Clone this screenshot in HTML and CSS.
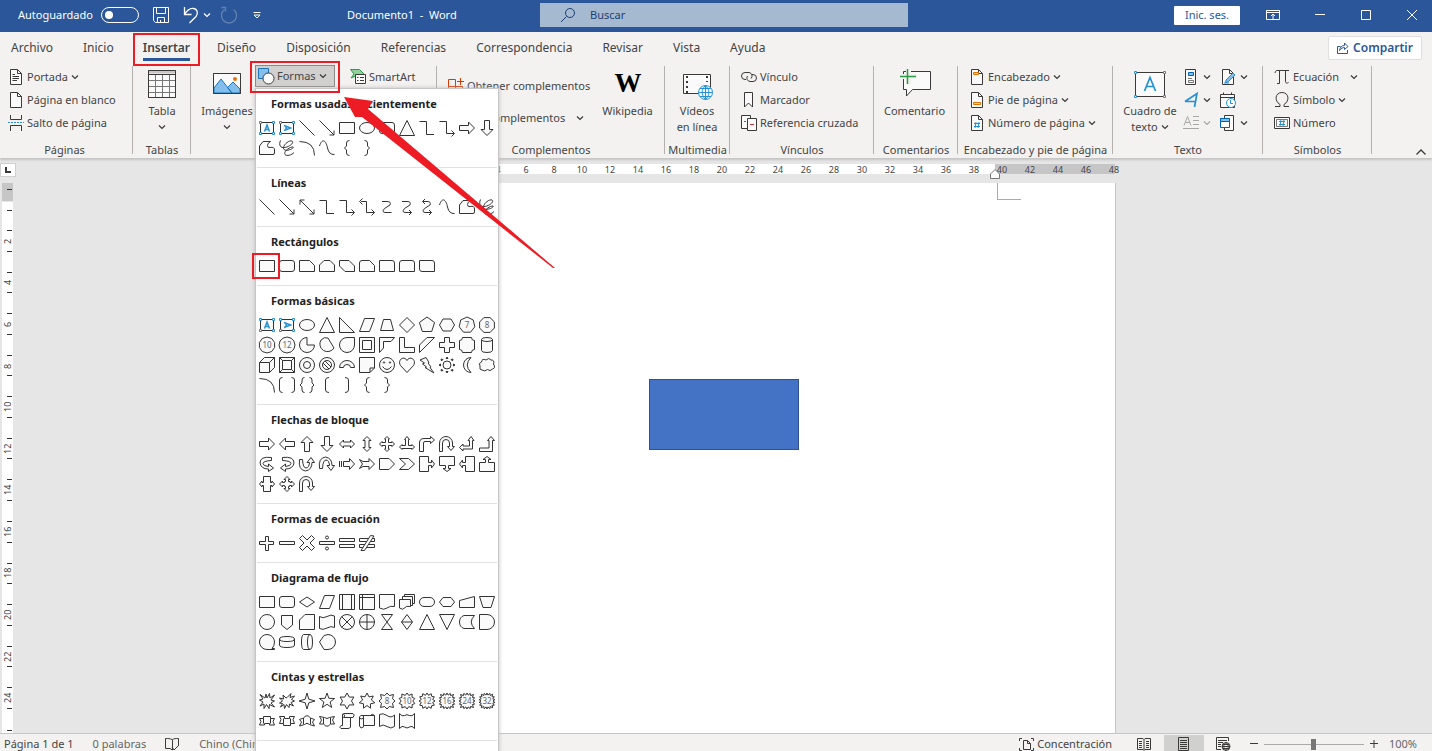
FILE: index.html
```html
<!DOCTYPE html>
<html lang="es">
<head>
<meta charset="utf-8">
<title>Documento1 - Word</title>
<link rel="stylesheet" href="styles.css">
</head>
<body>
<svg class="defs" aria-hidden="true">
  <symbol id="chev" viewBox="0 0 8 8"><path d="M1 2.500L4 5.500L7 2.500" stroke-width="1.200"/></symbol>
  <symbol id="doc" viewBox="0 0 16 16"><path class="paper" d="M2.500.5H9.500L13.500 4.500V15.500H2.500Z"/><path d="M9.500.5V4.500H13.500"/></symbol>
</svg>

<header class="titlebar">
  <label class="autosave">Autoguardado <input type="checkbox" class="switch"></label>
  <div class="quick">
    <button aria-label="Guardar"><svg width="18" height="18" viewBox="0 0 18 18"><path d="M1.500 1.500H16.500V16.500H3.500L1.500 14.500ZM4.500 1.500V7.500H13.500V1.500M5.500 16.500V11.500H12.500V16.500M8.500 14V16.500"/></svg></button>
    <button aria-label="Deshacer"><svg width="18" height="18" viewBox="0 0 18 18"><path d="M2.500 1V8.500H9.500M2.500 8.500C5 4.500 8 2 11.500 2.500C15.500 3 16.500 7.500 14 10.500L7.500 17" stroke-width="1.300"/></svg></button>
    <button aria-label="Opciones de deshacer"><svg width="8" height="8"><use href="#chev"/></svg></button>
    <button aria-label="Rehacer" class="faded"><svg width="18" height="18" viewBox="0 0 18 18"><path d="M4.500 3.500A7.500 7.500 0 1 0 13.500 3.500M1.500 1.500H5.500V5.500" stroke-width="1.300"/></svg></button>
    <button aria-label="Personalizar barra"><svg width="8" height="8" viewBox="0 0 8 8"><path d="M.5 1.500H7.500M1 4L4 7L7 4Z"/></svg></button>
  </div>
  <div class="doc-title">Documento1&nbsp; -&nbsp; Word</div>
  <label class="search"><svg width="16" height="16" viewBox="0 0 16 16"><circle cx="10" cy="6" r="4.500"/><path d="M6.500 9.500L1 15"/></svg><input type="text" placeholder="Buscar" aria-label="Buscar"></label>
  <div class="window-tools">
    <button class="signin">Inic. ses.</button>
    <button aria-label="Opciones de cinta"><svg width="14" height="12" viewBox="0 0 14 12"><path d="M.5 1.500H13.500V10.500H.5ZM.5 3.500H13.500M7 10V5M5 7L7 5L9 7"/></svg></button>
    <button aria-label="Minimizar"><svg width="12" height="12" viewBox="0 0 12 12"><path d="M1 5.500H11"/></svg></button>
    <button aria-label="Maximizar"><svg width="12" height="12" viewBox="0 0 12 12"><path d="M1.500 1.500H10.500V10.500H1.500Z"/></svg></button>
    <button aria-label="Cerrar"><svg width="12" height="12" viewBox="0 0 12 12"><path d="M1 1L11 11M11 1L1 11"/></svg></button>
  </div>
</header>

<nav class="tabs">
  <button>Archivo</button><button>Inicio</button><button class="active">Insertar</button><button>Diseño</button><button>Disposición</button><button>Referencias</button><button>Correspondencia</button><button>Revisar</button><button>Vista</button><button>Ayuda</button>
  <button class="share"><svg width="12" height="12" viewBox="0 0 12 12"><path d="M3.500 4.500H.5V11.500H10.500V8M2.500 8.500C3 5 5 3.500 7.500 3.500V1L11 4.500L7.500 7.500V5.500C5.500 5.500 4 6.500 2.500 8.500Z"/></svg>Compartir</button>
</nav>

<section class="ribbon">
  <div class="group pages">
    <div class="tools"><div class="col">
      <button><svg class="i"><use href="#doc"/><path d="M4.500 5.500H7M4.500 7.500H11M4.500 9.500H11M4.500 11.500H9"/></svg>Portada<svg class="c"><use href="#chev"/></svg></button>
      <button><svg class="i"><use href="#doc"/></svg>Página en blanco</button>
      <button><svg class="i"><path d="M2.500 0V4.500H13.500V0M2.500 16V10.500H13.500V16"/><path class="blue" d="M0 7.500H16" stroke-dasharray="2 1"/></svg>Salto de página</button>
    </div></div>
    <h2>Páginas</h2>
  </div>
  <div class="group tables">
    <div class="tools"><button class="big"><svg class="b"><path class="paper" d="M2.500 2.500H29.500V29.500H2.500Z"/><path d="M2 4H30" stroke="#c8c6c4" stroke-width="3"/><path d="M2.500 12.500H29.500M2.500 18.500H29.500M2.500 24.500H29.500M9.500 6V29M16.500 6V29M23.500 6V29" stroke="#777"/><path d="M2.500 2.500H29.500V29.500H2.500ZM2.500 6.500H29.500"/></svg><span>Tabla</span><svg class="c"><use href="#chev"/></svg></button></div>
    <h2>Tablas</h2>
  </div>
  <div class="group pictures">
    <div class="tools">
      <button class="big"><svg class="b"><path class="paper" d="M2.500 5.500H29.500V25.500H2.500Z"/><path d="M3 20L10 11L21 25H3ZM16.500 19.500L22 14L29 21V25H21Z" fill="#83beec" stroke="#1e74b8"/><circle cx="24" cy="11" r="2" fill="#e8710a" stroke="none"/><path d="M2.500 5.500H29.500V25.500H2.500Z"/></svg><span>Imágenes</span><svg class="c"><use href="#chev"/></svg></button>
      <div class="shapes-menu">
        <button class="shapes-button"><svg class="i"><path d="M.5.5H10.500V10.500H.5Z" fill="#83beec" stroke="#1e74b8"/><circle cx="10.500" cy="10.500" r="5.500" fill="#fafafa" stroke="#3b3a39"/></svg>Formas<svg class="c"><use href="#chev"/></svg></button>
        <div class="gallery" id="gallery"></div>
        <svg class="arrow" viewBox="0 0 212 176"><path d="M0 2L29 6L24 14L211 173L209 173L18 22L11 22Z"/></svg>
      </div>
      <div class="col smart"><button><svg class="i"><path d="M.5.5H9.500L14 5L12 7H5.500L1 9L4 5Z" fill="#8fd19b" stroke="#2c9a46"/><path class="paper" d="M5.500 5.500H15.500V14.500H5.500Z"/><path d="M7 8.500H8.500M10 8.500H14M7 11.500H8.500M10 11.500H14"/></svg>SmartArt</button></div>
    </div>
    <h2>Ilustraciones</h2>
  </div>
  <div class="group addins">
    <div class="tools">
      <div class="col wide">
        <button><svg class="i"><path d="M.5 1.500H7.500V15.500H.5ZM.5 8.500H14.500V15.500H.5ZM12.500 0V7M9 3.500H16" stroke="#d83b01"/></svg>Obtener complementos</button>
        <button><svg class="i"><path d="M1.500 4.500L8 1L14.500 4.500V12L8 15L1.500 12ZM8 8V15" stroke="#d83b01"/></svg>Mis complementos<svg class="c far"><use href="#chev"/></svg></button>
      </div>
      <button class="big"><svg class="b wiki"><text x="16" y="24" text-anchor="middle">W</text></svg><span>Wikipedia</span></button>
    </div>
    <h2>Complementos</h2>
  </div>
  <div class="group media">
    <div class="tools"><button class="big"><svg class="b"><path class="paper" d="M2.500 6.500H29.500V25.500H2.500Z"/><path d="M6 8V25M26 8V14" stroke-width="2" stroke-dasharray="2 3"/><circle cx="24.500" cy="24.500" r="7" fill="#fff" class="blue"/><path class="blue" d="M17.500 24.500H31.500M19 20.500H30M19 28.500H30M24.500 17.500V31.500M24.500 17.500C20 22 20 27 24.500 31.500C29 27 29 22 24.500 17.500"/></svg><span>Vídeos<br>en línea</span></button></div>
    <h2>Multimedia</h2>
  </div>
  <div class="group links">
    <div class="tools"><div class="col">
      <button><svg class="i"><path d="M5 10.500H4A3.500 3.500 0 0 1 4 3.500H8A3.500 3.500 0 0 1 10 9.500M11 5.500H12A3.500 3.500 0 0 1 12 12.500H9A3.500 3.500 0 0 1 6.500 7"/></svg>Vínculo</button>
      <button><svg class="i"><path class="paper" d="M3.500.5H11.500V15L7.500 11L3.500 15Z"/></svg>Marcador</button>
      <button><svg class="i"><path class="paper" d="M.5.5H9.500V13.500H.5Z"/><path class="paper" d="M6.500 3.500H15.500V15.500H6.500Z"/><path d="M3 6.500H5M9 9.500H13" stroke="#d13438"/></svg>Referencia cruzada</button>
    </div></div>
    <h2>Vínculos</h2>
  </div>
  <div class="group comments">
    <div class="tools"><button class="big"><svg class="b"><path class="paper" d="M4.500 3.500H31.500V21.500H13.500L7.500 28V21.500H4.500Z"/><path d="M2 8.500H18M9.500 0V17" stroke="#f3f2f1" stroke-width="5"/><path d="M1 8.500H17M8.500 1V16" stroke="#2c9a46" stroke-width="1.500"/></svg><span>Comentario</span></button></div>
    <h2>Comentarios</h2>
  </div>
  <div class="group headers">
    <div class="tools"><div class="col">
      <button><svg class="i"><use href="#doc"/><path d="M4.500 3.500H9.500V5.500H4.500Z" stroke="#e07000" fill="#fbd9a8"/></svg>Encabezado<svg class="c"><use href="#chev"/></svg></button>
      <button><svg class="i"><use href="#doc"/><path d="M4.500 10.500H11.500V12.500H4.500Z" stroke="#e07000" fill="#fbd9a8"/></svg>Pie de página<svg class="c"><use href="#chev"/></svg></button>
      <button><svg class="i"><use href="#doc"/><path class="blue" d="M7 7L6 13M10 7L9 13M5 8.500H11M5 11.500H11"/></svg>Número de página<svg class="c"><use href="#chev"/></svg></button>
    </div></div>
    <h2>Encabezado y pie de página</h2>
  </div>
  <div class="group text">
    <div class="tools">
      <button class="big"><svg class="b"><path class="paper" d="M1.500 4.500H30.500V28.500H1.500Z"/><path class="blue" d="M10.500 23L16 9.500L21.500 23M12 18.500H20" stroke-width="1.700"/><path d="M.5 3.500H2.500V5.500H.5ZM29.500 3.500H31.500V5.500H29.500ZM.5 27.500H2.500V29.500H.5ZM29.500 27.500H31.500V29.500H29.500Z" fill="#fff" class="blue"/></svg><span>Cuadro de<br>texto <svg class="c"><use href="#chev"/></svg></span></button>
      <div class="minis">
        <button aria-label="Elementos rápidos"><svg class="i"><path class="paper" d="M2.500.5H12.500V15.500H2.500Z"/><path d="M5.500 3.500H10.500V6.500H5.500Z" fill="#83beec" stroke="#0063b1"/><path d="M5 9.500H9M5.500 11.500H10.500V13.500H5.500Z" stroke="#777"/></svg><svg class="c"><use href="#chev"/></svg></button>
        <button aria-label="Línea de firma"><svg class="i"><use href="#doc"/><path d="M13 4L15 6L8 13L5.500 13.500L6 11Z" fill="#83beec" class="blue"/><path class="blue" d="M4 14H9"/></svg><svg class="c"><use href="#chev"/></svg></button>
        <button aria-label="WordArt"><svg class="i"><path class="blue" d="M2 9.500L14 1.500L11.500 15M2 9.500H12.500" stroke-width="1.700"/></svg><svg class="c"><use href="#chev"/></svg></button>
        <button aria-label="Fecha y hora"><svg class="i"><path class="paper" d="M.5 2.500H14.500V15.500H.5Z"/><path d="M.5 5.500H14.500M3.500.5V3M11.500.5V3"/><circle cx="11" cy="11" r="4.500" fill="#fff" class="blue"/><path class="blue" d="M10.500 8V11.500H13"/></svg></button>
        <button aria-label="Letra capital" class="off"><svg class="i"><path d="M1 10.500L4.500 1.500L8 10.500M2.500 7.500H7M10 1.500H16M10 5.500H16M10 9.500H16M0 13.500H16"/></svg><svg class="c"><use href="#chev"/></svg></button>
        <button aria-label="Objeto"><svg class="i"><path class="paper" d="M4.500.5H13.500V15.500H4.500Z"/><path d="M.5 3.500H9.500V12.500H.5Z" fill="#fff" stroke="#0063b1"/><path d="M.5 3.500H9.500V6.500H.5Z" fill="#83beec" stroke="#0063b1"/></svg><svg class="c"><use href="#chev"/></svg></button>
      </div>
    </div>
    <h2>Texto</h2>
  </div>
  <div class="group symbols">
    <div class="tools"><div class="col">
      <button><svg class="i"><path d="M1 4C1.500 1.500 2 1.500 4 1.500H15M5.500 1.500V14.500M11.500 1.500V12C11.500 14.500 13 14.500 14.500 13.500M3 14.500H5.500"/></svg>Ecuación<svg class="c far"><use href="#chev"/></svg></button>
      <button><svg class="i"><path d="M1 14.500H6V12.500C0 9 1 .5 8 .5S16 9 10 12.500V14.500H15"/></svg>Símbolo<svg class="c"><use href="#chev"/></svg></button>
      <button><svg class="i"><path class="paper" d="M.5 2.500H15.500V13.500H.5Z"/><path d="M2.500 4.500H13.500V11.500H2.500Z" stroke="#777"/><path class="blue" d="M7 5L6 11M10 5L9 11M5 6.500H11M5 9.500H11"/></svg>Número</button>
    </div></div>
    <h2>Símbolos</h2>
  </div>
  <button class="collapse" aria-label="Contraer la cinta"><svg width="12" height="8" viewBox="0 0 12 8"><path d="M1.500 6.500L6 2L10.500 6.500" stroke-width="1.300"/></svg></button>
</section>

<main class="workspace">
  <div class="left">
    <button class="tabstop" aria-label="Tabulación"><svg width="6" height="6" viewBox="0 0 6 6"><path d="M1 0V5H6" stroke-width="2"/></svg></button>
    <div class="vruler" id="vruler"></div>
  </div>
  <div class="center">
    <div class="hruler" id="hruler"><svg class="indent" viewBox="0 0 10 10"><path d="M.5 9.500V5L5 .5L9.500 5V9.500Z"/></svg></div>
    <div class="sheet"><div class="corner"></div><div class="drawn-rect"></div></div>
  </div>
</main>

<footer class="status">
  <span>Página 1 de 1</span>
  <span class="soft">0 palabras</span>
  <button aria-label="Revisión"><svg width="15" height="13" viewBox="0 0 15 13"><path d="M7 1.500C5 .5 3 .5.5.5V10.500H5L7.500 12V1.500C9 .5 11 .5 13.500.5V7M7 9L9 12L14 7"/></svg></button>
  <span class="soft">Chino (China)</span>
  <div class="view">
    <button class="focus"><svg width="15" height="13" viewBox="0 0 15 13"><path d="M3 .5H.5V3M12 .5H14.500V3M3 12.500H.5V10M12 12.500H14.500V10M4.500 2.500H8.500L11.500 5.500V11.500H4.500ZM8.500 2.500V5.500H11.500"/></svg>Concentración</button>
    <button aria-label="Modo de lectura"><svg width="14" height="13" viewBox="0 0 14 13"><path d="M.5.5H6L7 1.500L8 .5H13.500V11.500H8L7 12.500L6 11.500H.5ZM7 1.500V12M2 3.500H5M2 5.500H5M2 7.500H5M2 9.500H5M9 3.500H12M9 5.500H12M9 7.500H12M9 9.500H12"/></svg></button>
    <button aria-label="Diseño de impresión" class="on"><svg width="12" height="14" viewBox="0 0 12 14"><path d="M.5.5H10.500V13.500H.5ZM2 3.500H9M2 5.500H9M2 7.500H9M2 9.500H9M2 11.500H9"/></svg></button>
    <button aria-label="Diseño web"><svg width="15" height="14" viewBox="0 0 15 14"><path d="M5 12.500H.5V.5H12.500V4M2 3.500H11M2 5.500H7M2 7.500H5M2 9.500H5"/><circle cx="10" cy="9.500" r="4"/><path d="M6 9.500H14M10 5.500C7 8 7 11 10 13.500C13 11 13 8 10 5.500M7 7.500H13M7 11.500H13"/></svg></button>
    <button aria-label="Alejar"><svg width="8" height="8" viewBox="0 0 8 8"><path d="M0 3.500H8"/></svg></button>
    <input type="range" min="0" max="100" value="50" aria-label="Zoom">
    <button aria-label="Acercar"><svg width="8" height="8" viewBox="0 0 8 8"><path d="M0 3.500H8M4 0V8"/></svg></button>
    <span class="soft">100%</span>
  </div>
</footer>
<script src="gallery.js"></script>
</body>
</html>
```
FILE: styles.css
```css
* { box-sizing: border-box; }
body {
  margin: 0; height: 100vh; overflow: hidden; display: flex; flex-direction: column;
  font: 11px/16px "Noto Sans", "Open Sans", sans-serif; color: #444; background: #e6e6e6;
}
button { font: inherit; color: inherit; background: none; border: 0; padding: 0; display: flex; align-items: center; white-space: nowrap; }
svg { fill: none; stroke: #3b3a39; display: block; flex: none; overflow: visible; }
.defs { position: absolute; width: 0; height: 0; }
.i { width: 16px; height: 16px; }
.b { width: 32px; height: 32px; }
.c { width: 8px; height: 8px; }
.paper { fill: #fafafa; }
.blue { stroke: #2590d4; }

.titlebar { height: 32px; flex: none; background: #2b579a; color: #fff; display: flex; align-items: center; padding: 0 14px 2px 18px; }
.titlebar svg { stroke: #fff; }
.autosave { display: flex; align-items: center; gap: 8px; width: 122px; }
.switch { appearance: none; margin: 0; width: 38px; height: 16px; border: 1px solid #fff; border-radius: 8px; display: flex; align-items: center; padding-left: 3px; flex: none; }
.switch::before { content: ""; width: 8px; height: 8px; border-radius: 50%; background: #fff; }
.quick { display: flex; align-items: center; margin-left: 12px; gap: 12px; width: 195px; }
.quick button:nth-child(3) { margin-left: -9px; margin-right: -3px; }
.quick button:nth-child(5) { margin-left: 3px; }
.faded { opacity: .25; }
.doc-title { width: 193px; }
.search { width: 368px; height: 24px; background: #a5b9d1; display: flex; align-items: center; gap: 14px; padding-left: 20px; }
.search svg { stroke: #1e3f73; }
.search input { border: 0; background: none; font: inherit; color: #1e3f73; padding: 0; flex: 1; min-width: 0; outline: 0; }
.search input::placeholder { color: #1e3f73; opacity: 1; }
.window-tools { margin-left: auto; display: flex; align-items: center; gap: 34px; }
.signin { background: #fff; color: #2b579a; width: 66px; height: 19px; justify-content: center; border-radius: 1px; margin-right: -8px; }

.tabs { height: 32px; flex: none; background: #f3f2f1; display: flex; align-items: center; gap: 30px; padding: 0 10px 0 11px; font-size: 12px; }
.active { position: relative; font-weight: 600; height: 26px; margin: 0 -3px 0 -1px; }
.active::before { content: ""; position: absolute; left: 0; right: 0; bottom: 0; height: 3px; background: #2b579a; }
.active::after { content: ""; position: absolute; inset: -2px -10px -5px; border: 2px solid #ed1c24; z-index: 6; }
.share { margin-left: auto; background: #fff; border: 1px solid #e1dfdd; border-radius: 2px; width: 94px; height: 24px; justify-content: center; gap: 4px; color: #2b579a; font-weight: 600; }
.share svg { stroke: #2b579a; }

.ribbon { height: 94px; flex: none; background: #f3f2f1; display: flex; padding-top: 1px; box-shadow: 0 2px 2px #c4c4c4; position: relative; }
.group { position: relative; flex: none; display: flex; flex-direction: column; }
.group::after { content: ""; position: absolute; right: 0; top: 1px; bottom: 4px; width: 1px; background: #b3b0ad; }
.group h2 { margin: 0; font-size: 11px; font-weight: 400; line-height: 17px; text-align: center; white-space: nowrap; }
.tools { flex: 1; display: flex; align-items: flex-start; }
.col button { height: 23px; gap: 3px; }
.col .far { margin-left: 8px; }
.big { flex-direction: column; padding-top: 3px; gap: 3px; min-width: 54px; }
.big .c { margin-top: 1px; }
.big span .c { display: inline-block; }
.pages { width: 133px; padding-left: 8px; }
.pages h2 { margin-left: -12px; }
.tables { width: 58px; }
.tables .big { width: 100%; }
.pictures { width: 246px; padding-left: 9px; }
.addins { width: 228px; padding-left: 11px; }
.addins .wide { padding-top: 5px; width: 152px; }
.addins .wide button { height: 32px; }
.addins .big { padding-left: 1px; }
.media { width: 65px; padding-left: 5px; }
.media h2 { margin-left: -5px; }
.addins h2 { margin-left: -11px; }
.links { width: 144px; padding-left: 11px; }
.links h2 { margin-left: -11px; }
.comments { width: 84px; padding-left: 10px; }
.comments h2 { margin-left: -10px; }
.headers { width: 155px; padding-left: 11px; }
.headers h2 { margin-left: -11px; }
.text { width: 150px; padding-left: 10px; }
.text h2 { margin-left: -10px; }
.symbols { width: 109px; padding-left: 11px; }
.symbols h2 { margin-left: -11px; }
.minis { display: grid; grid-template-columns: 37px 30px; grid-auto-rows: 23px; margin-left: 6px; }
.minis button { gap: 4px; }
.off { opacity: .4; }
.wiki { fill: #000; stroke: none; font: bold 27px "Liberation Serif", serif; }
.collapse { margin: auto 5px 2px auto; }

.shapes-menu { position: relative; margin-left: 1px; z-index: 5; }
.shapes-button { width: 80px; height: 22px; background: #d2d0ce; border: 1px solid #8a8886; padding-left: 2px; gap: 3px; }
.shapes-button::after { content: ""; position: absolute; inset: -4px -5px -6px; border: 2px solid #ed1c24; z-index: 6; }
.smart { margin-left: 15px; }
.gallery { position: absolute; left: 0; top: 23px; width: 244px; background: #fff; border: 1px solid #c6c6c6; box-shadow: 0 0 4px #bbb; padding-bottom: 40px; z-index: 5; }
.gallery section { margin: 0 1px; padding-bottom: 9px; border-bottom: 1px solid #e1e1e1; }
.gallery h3 { margin: 0; padding-left: 14px; font-size: 11px; line-height: 29px; font-weight: 700; color: #222; }
.grid { display: grid; grid-template-columns: repeat(12, 20px); grid-auto-rows: 20px; }
.grid svg { width: 20px; height: 20px; fill: #fafafa; stroke: #333; }
.grid .blue { stroke: #2590d4; }
.grid text { font-size: 8px; fill: #666; stroke: none; text-anchor: middle; }
.grid .line { fill: none; }
.marked { position: relative; }
.marked::after { content: ""; position: absolute; inset: -3px -3px -3px -5px; border: 2px solid #ed1c24; }
.arrow { position: absolute; left: 89px; top: 30px; width: 212px; height: 176px; fill: #ed1c24; stroke: none; z-index: 7; }

.workspace { flex: 1; min-height: 0; display: flex; }
.left { width: 17px; flex: none; display: flex; flex-direction: column; padding-top: 5px; }
.tabstop { width: 16px; height: 14px; background: #fff; border: 1px solid #d0d0d0; justify-content: center; margin-bottom: 6px; }
.vruler { flex: 1; width: 11px; margin-left: 2px; background: #fff; display: flex; flex-direction: column; font-size: 9px; line-height: 11px; }
.vruler i { display: block; width: 5px; height: 1px; background: #333; margin-left: 5px; flex: none; }
.margin { height: 19px; background: #c6c6c6; border-bottom: 1px solid #e6e6e6; padding-top: 6px; }
.lead { height: 18px; padding-top: 8px; }
.mark { flex: 1; min-height: 0; display: flex; flex-direction: column; justify-content: space-between; padding: 10px 0; }
.mark span { writing-mode: vertical-rl; transform: rotate(180deg); height: 16px; margin: -2px 0; text-align: center; width: 11px; }
.tail { height: 14px; padding-top: 11px; }
.center { flex: 1; display: flex; flex-direction: column; align-items: center; padding: 6px 13px 0 0; }
.hruler { position: relative; width: 794px; height: 10px; display: flex; justify-content: flex-end; background: linear-gradient(to right, #fff 674px, #c6c6c6 674px); font-size: 9px; line-height: 11px; margin-bottom: 9px; flex: none; }
.hruler span { width: 28px; text-align: center; flex: none; }
.hruler span:last-child { margin-right: -13px; }
.indent { position: absolute; left: 669px; top: 5px; width: 10px; height: 10px; fill: #fff; stroke: #777; }
.sheet { position: relative; flex: 1; width: 795px; background: #fff; border-right: 1px solid #c6c6c6; }
.corner { position: absolute; left: 676px; top: 0; width: 24px; height: 17px; border: solid #aaa; border-width: 0 0 1px 1px; }
.drawn-rect { position: absolute; left: 328px; top: 196px; width: 150px; height: 71px; background: #4472c4; border: 1px solid #2f528f; }

.status { height: 18px; flex: none; background: #f3f2f1; border-top: 1px solid #c6c6c6; display: flex; align-items: center; gap: 19px; padding: 3px 15px 0 4px; white-space: nowrap; }
.soft { color: #666; }
.view { margin-left: auto; display: flex; align-items: center; }
.view button { width: 40px; height: 18px; justify-content: center; }
.view .focus { width: auto; gap: 3px; margin-right: 12px; }
.view .on { background: #d0d0ce; }
.view button:nth-of-type(n+5) { width: 20px; }
.view .soft { margin-left: 5px; }
.view input { appearance: none; width: 100px; height: 12px; margin: 0; background: linear-gradient(#aaa, #aaa) center / 100% 1px no-repeat; }
.view input::-webkit-slider-thumb { appearance: none; width: 5px; height: 11px; background: #777; }
```
FILE: gallery.js
```js
// Shape drawings use a 20 x 20 box. A leading "~" marks an open line without fill.
const ring = (r, cx = 10, cy = 10) => `M${cx - r} ${cy}a${r} ${r} 0 1 0 ${2 * r} 0a${r} ${r} 0 1 0 ${-2 * r} 0Z`;
// square > 0 pushes the points out towards the corners of the box
const spokes = (n, radii, turn = 0, square = 0) => {
  let d = "";
  for (let k = 0; k < n; k++) {
    const a = (k / n) * 2 * Math.PI - Math.PI / 2 + turn, c = Math.cos(a), s = Math.sin(a);
    const r = radii[k % radii.length] / Math.max(Math.abs(c), Math.abs(s)) ** square;
    d += (k ? "L" : "M") + (10 + r * c).toFixed(1) + " " + (10 + r * s).toFixed(1);
  }
  return d + "Z";
};
const poly = (n, turn) => spokes(n, [8], turn);
const star = (n, inner, outer = 8) => spokes(2 * n, [outer, inner]);
const seal = (n, inner) => spokes(2 * n, [8, inner], 0, .4);
const label = (d, t) => `<path d="${d}"/><text x="10" y="13">${t}</text>`;
const layers = (...ds) => ds.map((d) => `<path d="${d}"/>`).join("");
const textBox = (a) => `<path d="M3.500 4.500H16.500V15.500H3.500Z"/><g class="blue"><path class="line" stroke-width="1.500" d="${a}"/><path fill="#fff" d="M2.500 3.500h2v2h-2ZM15.500 3.500h2v2h-2ZM2.500 14.500h2v2h-2ZM15.500 14.500h2v2h-2Z"/></g>`;

const boxA = textBox("M7.500 13.500L10 7L12.500 13.500M8.500 11.500H11.500");
const boxV = textBox("M7 7.500L13.500 10L7 12.500M9 8.500V11.500");
const line = "~M2.500 2.500L17.500 17.500";
const lineArrow = "~M2.500 2.500L17 17M17 12.500V17H12.500";
const rect = "M2.500 4.500H17.500V15.500H2.500Z";
const oval = "M2.500 10a7.500 5.500 0 1 0 15 0a7.500 5.500 0 1 0 -15 0Z";
const round = "M5 4.500H15Q17.500 4.500 17.500 7V13Q17.500 15.500 15 15.500H5Q2.500 15.500 2.500 13V7Q2.500 4.500 5 4.500Z";
const triangle = "M10 2.500L17.500 17.500H2.500Z";
const elbow = "~M2.500 3.500H9.500V16.500H17";
const elbowArrow = "~M2.500 3.500H9.500V15.500H17M14.500 12.500L17.500 15.500L14.500 18.500";
const right = "M2.500 7.500H11.500V4L17.500 10L11.500 16V12.500H2.500Z";
const down = "M7.500 2.500H12.500V11.500H16L10 17.500L4 11.500H7.500Z";
const free = "M6 3.500H13.500Q10.500 5 10.500 7.500T13 9.500Q17.500 8.500 17.500 12V15Q17.500 16.500 16 16.500H2.500V8Z";
const scribble = "~M3.500 2.500C1.500 7 3.500 10.500 8 9.500C13 8.500 17.500 4.500 15 3C12.500 2 7 6 6.500 9.500C6 13 10.500 12.500 13.500 11.500C16 10.500 17.500 8.500 15 9C11 10 6.500 14 8 16.500C9.500 18.500 15 17 17 14.500";
const arc = "~M2.500 3.500Q17.500 3.500 17.500 17.500";
const curve = "~M2.500 8C5 0 9 2 10.500 10Q12 17 17.500 16.500";
const lb = "~M12.500 2.500Q9.500 2.500 9.500 5V8L7.500 10L9.500 12V15Q9.500 17.500 12.500 17.500";
const rb = "~M7.500 2.500Q10.500 2.500 10.500 5V8L12.500 10L10.500 12V15Q10.500 17.500 7.500 17.500";
const uturn = "M2.500 17.500V9A6.500 6.500 0 0 1 15.500 9V12.500H17.500L14 16.500L10.500 12.500H12.500V9A3.500 3.500 0 0 0 5.500 9V17.500Z";

const groups = [
  ["Formas usadas recientemente", [boxA, boxV, line, lineArrow, rect, oval, round, triangle, elbow, elbowArrow, right, down, free, scribble, arc, curve, lb, rb]],
  ["Líneas", [line, lineArrow, "~M3 3L17 17M17 12.500V17H12.500M7.500 3H3V7.500", elbow, elbowArrow,
    "~M4 4.500H9.500V15.500H17M14.500 12.500L17.500 15.500L14.500 18.500M5.500 1.500L2.500 4.500L5.500 7.500",
    "~M5 4.500H10Q14.500 4.500 13 8L7.500 11.500Q4 15.500 9 15.500H14.500",
    "~M5 4.500H10Q14.500 4.500 13 8L7.500 11.500Q4 15.500 9 15.500H14.500M12 13L14.500 15.500L12 18",
    "~M6 4.500H10Q14.500 4.500 13 8L7.500 11.500Q4 15.500 9 15.500H14.500M12 13L14.500 15.500L12 18M8 2L5.500 4.500L8 7", curve, free, scribble]],
  ["Rectángulos", [rect, round, "M2.500 4.500H12.500L17.500 9.500V15.500H2.500Z", "M7 4.500H13L17.500 9V15.500H2.500V9Z",
    "M2.500 4.500H12L17.500 10V15.500H8L2.500 10Z", "M5 4.500H12.500L17.500 9.500V15.500H2.500V7Q2.500 4.500 5 4.500Z",
    "M2.500 4.500H15Q17.500 4.500 17.500 7V15.500H2.500Z", "M5 4.500H15Q17.500 4.500 17.500 7V15.500H2.500V7Q2.500 4.500 5 4.500Z",
    "M2.500 4.500H15Q17.500 4.500 17.500 7V15.500H5Q2.500 15.500 2.500 13Z"]],
  ["Formas básicas", [boxA, boxV, oval, triangle, "M2.500 2.500L17.500 17.500H2.500Z", "M7.500 3.500H17.500L12.500 16.500H2.500Z", "M6.500 4.500H13.500L16.500 15.500H3.500Z",
    "M10 2.500L17.500 10L10 17.500L2.500 10Z", poly(5), "M6 4H14L17.500 10L14 16H6L2.500 10Z", label(poly(7), 7), label(poly(8, .39), 8),
    label(poly(10), 10), label(poly(12), 12), "M10 2.500A7.500 7.500 0 1 0 17.500 10H10Z", "M4 5A7.500 7.500 0 1 0 17 13L11 3Q7 1.500 4 5Z",
    "M10 2.500H17.500V10A7.500 7.500 0 1 1 10 2.500Z", "M2.500 2.500H17.500V17.500H2.500ZM5.500 5.500H14.500V14.500H5.500Z", "M2.500 2.500H17.500L14 6.500H6.500V13L2.500 17.500Z",
    "M2.500 2.500H7.500V12.500H17.500V17.500H2.500Z", "M10 2.500H17.500L2.500 17.500V10Z", "M7.500 2.500H12.500V7.500H17.500V12.500H12.500V17.500H7.500V12.500H2.500V7.500H7.500Z",
    "M5.500 2.500H14.500Q14.500 5.500 17.500 5.500V14.500Q14.500 14.500 14.500 17.500H5.500Q5.500 14.500 2.500 14.500V5.500Q5.500 5.500 5.500 2.500Z",
    "M4.500 4.500Q4.500 2.500 10 2.500T15.500 4.500V15.500Q15.500 17.500 10 17.500T4.500 15.500ZM4.500 4.500Q4.500 6.500 10 6.500T15.500 4.500",
    "M2.500 7.500L7.500 2.500H17.500V12.500L12.500 17.500H2.500ZM2.500 7.500H12.500V17.500M12.500 7.500L17.500 2.500",
    "M2.500 2.500H17.500V17.500H2.500ZM5.500 5.500H14.500V14.500H5.500ZM2.500 2.500L5.500 5.500M17.500 2.500L14.500 5.500M2.500 17.500L5.500 14.500M17.500 17.500L14.500 14.500",
    ring(7.5) + ring(3.5), ring(7.5) + ring(4.5) + "M6 8L12 14M8 6L14 12", "M2.500 12.500A7.500 7 0 0 1 17.500 12.500H13.500A3.500 3 0 0 0 6.500 12.500Z",
    "M2.500 2.500H17.500V13L13 17.500H2.500ZM17.500 13H13V17.500", ring(7.5) + ring(.7, 7, 7.500) + ring(.7, 13, 7.500) + "M5.500 11.500Q10 17.500 14.500 11.500",
    "M10 17.500L3.500 10.500C0 5 7 0 10 5.500C13 0 20 5 16.500 10.500Z", "M3 5L9 2.500L12 7.500L11 8L14 12L13 12.500L17 18L8 12.500L9.500 12L5.500 9L7.500 8Z",
    ring(4) + "M10 2L9 3.500H11ZM10 18L9 16.500H11ZM2 10L3.500 9V11ZM18 10L16.500 9V11ZM4 4L6 4.500L4.500 6ZM16 4L14 4.500L15.500 6ZM4 16L6 15.500L4.500 14ZM16 16L14 15.500L15.500 14Z",
    "M14 2.500A7.500 7.500 0 1 0 14 17.500Q6.500 10 14 2.500Z", "M5 15Q2 15 3 11Q1 8 4.500 7Q5 3 9 5Q12 2 14 5Q18 5 16.500 9Q19 13 15.500 14Q13 17 10.500 14.500Q8 17 5 15Z",
    arc, "~M5.500 2.500Q2.500 2.500 2.500 5V15Q2.500 17.500 5.500 17.500M14.500 2.500Q17.500 2.500 17.500 5V15Q17.500 17.500 14.500 17.500",
    "~M7.500 2.500Q5 2.500 5 5V8L3 10L5 12V15Q5 17.500 7.500 17.500M12.500 2.500Q15 2.500 15 5V8L17 10L15 12V15Q15 17.500 12.500 17.500",
    "~M12 2.500Q8.500 2.500 8.500 5V15Q8.500 17.500 12 17.500", "~M8 2.500Q11.500 2.500 11.500 5V15Q11.500 17.500 8 17.500", lb, rb]],
  ["Flechas de bloque", [right, "M17.500 7.500H8.500V4L2.500 10L8.500 16V12.500H17.500Z", "M7.500 17.500H12.500V8.500H16L10 2.500L4 8.500H7.500Z", down,
    "M2.500 10L6.500 6V8H13.500V6L17.500 10L13.500 14V12H6.500V14Z", "M10 2.500L14 6.500H12V13.500H14L10 17.500L6 13.500H8V6.500H6Z",
    "M10 2.500L12.500 5H11.500V8.500H15V7.500L17.500 10L15 12.500V11.500H11.500V15H12.500L10 17.500L7.500 15H8.500V11.500H5V12.500L2.500 10L5 7.500V8.500H8.500V5H7.500Z",
    "M10 2.500L12.500 5.500H11.500V11.500H15V10.500L17.500 13L15 15.500V14.500H5V15.500L2.500 13L5 10.500V11.500H8.500V5.500H7.500Z",
    "M2.500 17.500V9Q2.500 4.500 7 4.500H13.500V2.500L17.500 6L13.500 9.500V7.500H8Q6.500 7.500 6.500 9V17.500Z", uturn,
    "M14 2.500L17 6.500H15.500V15H6V17L2.500 13.500L6 10V12H12.500V6.500H11Z", "M14 2.500L17.500 6.500H15.500V17.500H2.500V14H12V6.500H10.500Z",
    "M14.500 3.500Q3 2 3 9Q4 15 11.500 15V17.500L16.500 14L11.500 10V12.500Q6 12 6 9.500T14.500 6.500Z",
    "M5.500 3.500Q17 2 17 9Q16 15 8.500 15V17.500L3.500 14L8.500 10V12.500Q14 12 14 9.500T5.500 6.500Z",
    "M2.500 5.500Q1 16 8.500 17Q15 16 15 8.500H17.500L14 3.500L10 8.500H12.500Q12 14 9 14T5.500 5.500Z",
    "M2.500 14.500Q1 4 8.500 3Q15 4 15 11.500H17.500L14 16.500L10 11.500H12.500Q12 6 9 6T5.500 14.500Z",
    "M2.500 7V13M4.500 7V13M6.500 7.500H12.500V4.500L17.500 10L12.500 15.500V12.500H6.500Z", "M2.500 5.500L6 7.500H12V4.500L17.500 10L12 15.500V12.500H6L2.500 14.500L5.500 10Z",
    "M2.500 4.500H12L17.500 10L12 15.500H2.500Z", "M2.500 4.500H11.500L17.500 10L11.500 15.500H2.500L8.500 10Z",
    "M2.500 2.500H11.500V8.500H14.500V6L17.500 10L14.500 14V11.500H11.500V17.500H2.500Z", "M2.500 2.500H17.500V11.500H11.500V14.500H14L10 17.500L6 14.500H8.500V11.500H2.500Z",
    "M17.500 2.500H8.500V8.500H5.500V6L2.500 10L5.500 14V11.500H8.500V17.500H17.500Z", "M2.500 17.500H17.500V8.500H11.500V5.500H14L10 2.500L6 5.500H8.500V8.500H2.500Z",
    "M6.500 2.500H13.500V8.500H15V7L17.500 10L15 13V11.500H13.500V17.500H6.500V11.500H5V13L2.500 10L5 7V8.500H6.500Z",
    "M10 2.500L13 5.500H11.500V7.500H13V8.500H14.500V7L17.500 10L14.500 13V11.500H12.500V12.500H11.500V14.500H13L10 17.500L7 14.500H8.500V12.500H7.500V11.500H5.500V13L2.500 10L5.500 7V8.500H7.500V7.500H8.500V5.500H7Z", uturn]],
  ["Formas de ecuación", ["M8.500 3.500H11.500V8.500H16.500V11.500H11.500V17.500H8.500V11.500H2.500V8.500H8.500Z", "M2.500 8.500H17.500V11.500H2.500Z",
    "M5.500 2.500L10 7L14.500 2.500L17.500 5.500L13 10L17.500 14.500L14.500 17.500L10 13L5.500 17.500L2.500 14.500L7 10L2.500 5.500Z",
    "M2.500 8.500H17.500V11.500H2.500Z" + ring(1.5, 10, 4.5) + ring(1.5, 10, 15.5), "M2.500 5.500H17.500V8.500H2.500ZM2.500 11.500H17.500V14.500H2.500Z",
    layers("M2.500 5.500H17.500V8.500H2.500ZM2.500 11.500H17.500V14.500H2.500Z", "M4 17.500L13.500 2.500L17 3L7.500 17.500Z")]],
  ["Diagrama de flujo", [rect, round, "M10 5L17.500 10L10 15L2.500 10Z", "M7.500 3.500H17.500L12.500 16.500H2.500Z", "M2.500 2.500H17.500V17.500H2.500ZM5.500 2.500V17.500M14.500 2.500V17.500",
    "M2.500 2.500H17.500V17.500H2.500ZM5.500 2.500V17.500M2.500 5.500H17.500", "M2.500 2.500H17.500V14.500Q13 13.500 10 16T2.500 16Z",
    layers("M7.500 2.500H17.500V11.500H7.500Z", "M5.500 4.500H15.500V13.500H5.500Z", "M2.500 7.500H13.500V14.500Q9 13.500 7.500 16T2.500 16Z"), "M7 5.500H13A4.500 4.500 0 0 1 13 14.500H7A4.500 4.500 0 0 1 7 5.500Z",
    "M6 5.500H14L17.500 10L14 14.500H6L2.500 10Z", "M2.500 8.500L17.500 4.500V15.500H2.500Z", "M2.500 4.500H17.500L14 15.500H6Z",
    ring(7.5), "M4.500 3.500H15.500V13L10 17.500L4.500 13Z", "M8 2.500H17.500V17.500H2.500V8Z", "M2.500 4.500Q6 7 10 4.500T17.500 4V15.500Q14 13.500 10 16T2.500 16.500Z",
    ring(7.5) + "M4.500 4.500L15.500 15.500M15.500 4.500L4.500 15.500", ring(7.5) + "M10 2.500V17.500M2.500 10H17.500", "M4.500 2.500H15.500L4.500 17.500H15.500Z",
    "M10 2.500L15.500 10L10 17.500L4.500 10ZM4.500 10H15.500", triangle, "M2.500 2.500H17.500L10 17.500Z", "M7 3.500H17.500Q11 10 17.500 16.500H7Q2.500 15 2.500 10T7 3.500Z",
    "M2.500 2.500H10A7.500 7.500 0 0 1 10 17.500H2.500Z", "M17.500 16.500V17.500H10A7.500 7.500 0 1 1 17.500 10Q17.500 14 15 16.500Z",
    "M2.500 7Q2.500 4.500 10 4.500T17.500 7V13Q17.500 15.500 10 15.500T2.500 13ZM2.500 7Q2.500 9.500 10 9.500T17.500 7",
    "M6.500 2.500H13Q15.500 3 15.500 10T13 17.500H6.500Q4.500 17 4.500 10T6.500 2.500ZM13 2.500Q10.500 3 10.500 10T13 17.500", "M7 3.500L11 2.500A7.500 7.500 0 0 1 11 17.500H7L2.500 10Z"]],
  ["Cintas y estrellas", ["M10 7L12.500 2.500L13 7L17.500 4L14 9L17.500 10L14 12L17.500 16L12.500 13.500L12 17.500L9.500 13.500L7 17.500L7 13L3 15L6 11L2.500 9L6 8L3 3.500L8 7L9 3Z",
    "M10 6.500L14 2.500L13 6.500L17.500 5L14.500 8.500L17.500 10L14 11.500L16.500 15L12.500 13L12 16.500L9.500 13.500L7.500 17.500L7 13.500L3.500 16L5.500 12.500L2.500 12L5.500 10L2.500 7L6.500 8L6 4L9 7Z",
    star(4, 2.5), star(5, 3.3), star(6, 4.5), star(7, 4.5),
    label(seal(8, 5.8), 8), label(seal(10, 5.8), 10), label(seal(12, 5.8), 12), label(seal(16, 6), 16), label(seal(16, 6), 24), label(seal(18, 6), 32),
    "M2.500 7.500H6.500V5.500H13.500V7.500H17.500L16 10.500L17.500 14H12.500V12.500H7.500V14H2.500L4 10.500ZM6.500 7.500V12.500M13.500 7.500V12.500",
    "M2.500 5.500H7.500V7.500H12.500V5.500H17.500L16 8.500L17.500 12.500H13.500V14.500H6.500V12.500H2.500L4 8.500ZM6.500 7.500V12.500M13.500 7.500V12.500",
    "M2.500 8.500L6.500 7Q10 2.500 13.500 7L17.500 8.500L15.500 11L17.500 15L12.500 13.500Q10 11 7.500 13.500L2.500 15L4.500 11ZM6.500 7V13M13.500 7V13",
    "M2.500 5.500L7.500 6.500Q10 8.500 12.500 6.500L17.500 5.500L15.500 9L17.500 13H13.500Q10 17.500 6.500 13H2.500L4.500 9ZM6.500 7V13M13.500 7V13",
    "M6.500 2.500H16Q18.500 3.500 16 6.500H13.500V16Q13 17.500 11 17.500H4Q1.500 16.500 4 14.500H5.500V4Q5.500 2.500 6.500 2.500ZM6.500 6.500H13.500M6.500 6.500Q9 5 6.500 3",
    "M2.500 6Q3.500 3.500 6 4.500H17.500V14.500H6.500V16Q3.500 18.500 2.500 15ZM6.500 4.500V14.500M2.500 7Q4 9 6.500 7M13.500 4.500Q15 2 17.500 4.500",
    "M2.500 3.500Q6 1.500 10 4.500T17.500 4V15.500Q14 18.500 10 15.500T2.500 15.500Z", "M2.500 2.500Q5 6 7.500 4.500T12.500 4.500T17.500 2.500V17.500Q15 14 12.500 16T7.500 16T2.500 17.500Z"]],
];

const draw = (s) => s[0] === "<" ? s : s[0] === "~" ? `<path class="line" d="${s.slice(1)}"/>` : `<path d="${s}"/>`;
document.getElementById("gallery").innerHTML = groups.map(([name, items]) =>
  `<section><h3>${name}</h3><div class="grid">` + items.map((s, k) =>
    `<button aria-label="${name} ${k + 1}"${name === "Rectángulos" && k === 0 ? ' class="marked"' : ""}><svg viewBox="0 0 20 20">${draw(s)}</svg></button>`).join("") +
  "</div></section>").join("");

let cells = "";
for (let n = 2; n <= 48; n += 2) cells += `<span>${n}</span>`;
document.getElementById("hruler").insertAdjacentHTML("beforeend", cells);

let marks = '<div class="margin"><i></i></div><div class="lead"><i></i></div>';
for (let n = 2; n <= 24; n += 2) marks += `<div class="mark"><i></i><span>${n}</span><i></i></div>`;
document.getElementById("vruler").innerHTML = marks + '<div class="tail"><i></i></div>';
```
